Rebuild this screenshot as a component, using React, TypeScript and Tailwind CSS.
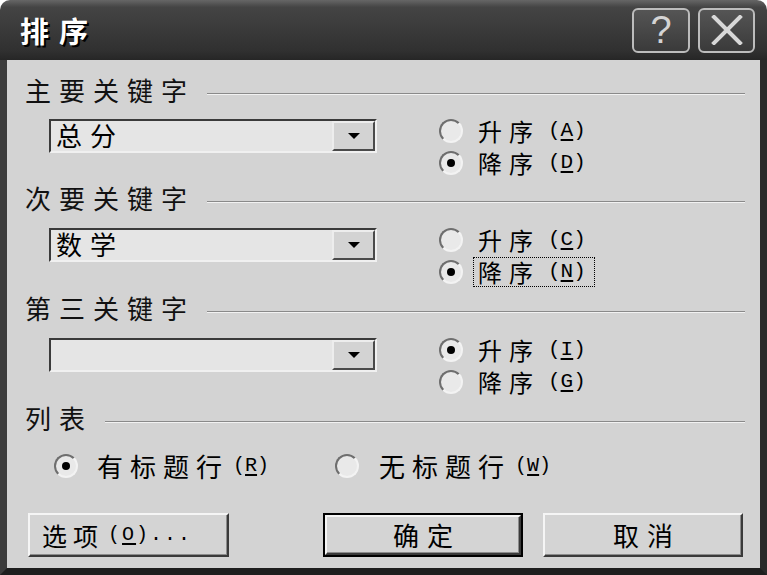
import React from 'react';

const cjk = "font-['Noto_Sans_CJK_SC','Noto_Sans_CJK_JP',sans-serif]";
const mono = "font-['Liberation_Mono','DejaVu_Sans_Mono',monospace]";

const Radio: React.FC<{ checked?: boolean }> = ({ checked }) => (
  <span className="flex h-[24px] w-[24px] shrink-0 items-center justify-center rounded-full border-2 border-t-[#6e6e6e] border-l-[#6e6e6e] border-r-[#f3f3f3] border-b-[#f3f3f3] bg-[#e9e9e9]">
    {checked && <span className="h-[8px] w-[8px] rounded-full bg-black" />}
  </span>
);

interface OptProps {
  text: string;
  keyChar: string;
  checked?: boolean;
  focus?: boolean;
}

// radio option row used in the three key sections
const Option: React.FC<OptProps> = ({ text, keyChar, checked, focus }) => (
  <div className="flex h-[32px] items-center">
    <Radio checked={checked} />
    <span
      className={`ml-[10px] flex h-[30px] items-center border pl-[4px] pr-[8px] ${
        focus ? 'border-dotted border-black' : 'border-transparent'
      }`}
    >
      <span className={`${cjk} text-[24px] leading-[24px] tracking-[7px] text-black`}>{text}</span>
      <span className={`${mono} ml-[8px] text-[21px] leading-[24px] text-black`}>
        (<u className="underline-offset-[3px]">{keyChar}</u>)
      </span>
    </span>
  </div>
);

const Combo: React.FC<{ value: string }> = ({ value }) => (
  <div className="mt-[4px] flex h-[34px] w-[328px] border-2 border-t-[#3a3a3a] border-l-[#3a3a3a] border-r-[#f0f0f0] border-b-[#f0f0f0] bg-[#e5e5e5]">
    <span className={`${cjk} flex-1 pl-[5px] text-[26px] leading-[28px] tracking-[8px] text-black`}>{value}</span>
    <div className="flex h-full w-[43px] items-center justify-center border-2 border-t-[#ededed] border-l-[#ededed] border-r-[#4a4a4a] border-b-[#4a4a4a] bg-[#d3d3d3]">
      <svg width="12" height="6" viewBox="0 0 12 6">
        <path d="M0 0 H12 L6 6 Z" fill="#000" />
      </svg>
    </div>
  </div>
);

const SectionLabel: React.FC<{ text: string; className?: string }> = ({ text, className = '' }) => (
  <div className={`flex h-[28px] items-center ${className}`}>
    <span className={`${cjk} text-[26px] leading-[28px] tracking-[8px] text-[#111]`}>{text}</span>
    <div className="ml-[12px] mt-[8px] h-[2px] flex-1 border-t border-b border-t-[#8a8a8a] border-b-[#f2f2f2]" />
  </div>
);

const KeySection: React.FC<{
  label: string;
  value: string;
  labelMt: string;
  contentMt: string;
  asc: OptProps;
  desc: OptProps;
}> = ({ label, value, labelMt, contentMt, asc, desc }) => (
  <>
    <SectionLabel text={label} className={labelMt} />
    <div className={`flex h-[64px] items-start pl-[24px] ${contentMt}`}>
      <Combo value={value} />
      <div className="ml-[62px] flex flex-col">
        <Option {...asc} />
        <Option {...desc} />
      </div>
    </div>
  </>
);

const raised =
  'border-2 border-t-[#f5f5f5] border-l-[#f5f5f5] border-r-[#3a3a3a] border-b-[#3a3a3a] bg-[#d4d4d4] shadow-[inset_-1px_-1px_0_#8c8c8c]';

export default function App() {
  return (
    <div className="flex h-[575px] w-[767px] flex-col bg-white">
      {/* Title bar */}
      <div className="flex h-[60px] shrink-0 items-center rounded-t-[10px] bg-[linear-gradient(#666_0%,#444_12%,#3a3a3a_50%,#303030_85%,#262626_100%)] pl-[20px] pr-[12px]">
        <span
          className={`${cjk} text-[29px] font-bold leading-none tracking-[10px] text-white [text-shadow:2px_2px_0_#000]`}
        >
          排序
        </span>
        <div className="ml-auto flex gap-[8px]">
          <div className="flex h-[45px] w-[58px] items-center justify-center rounded-[6px] border-2 border-[#bcbcbc] bg-[linear-gradient(#555,#3a3a3a)]">
            <span className="font-['Liberation_Sans',sans-serif] text-[38px] leading-none text-[#d4d4d4]">?</span>
          </div>
          <div className="flex h-[45px] w-[57px] items-center justify-center rounded-[6px] border-2 border-[#bcbcbc] bg-[linear-gradient(#555,#3a3a3a)]">
            <svg width="32" height="30" viewBox="0 0 32 30">
              <path d="M3 2 L29 28 M29 2 L3 28" stroke="#d8d8d8" strokeWidth="4" strokeLinecap="square" />
            </svg>
          </div>
        </div>
      </div>

      {/* Body */}
      <div className="flex flex-1 flex-col border-x-[7px] border-b-[7px] border-l-[#3c3c3c] border-r-[#2a2a2a] border-b-[#1e1e1e] bg-[#d3d3d3] pl-[18px] pr-[15px] pt-[16px]">
        <KeySection
          label="主要关键字"
          value="总分"
          labelMt=""
          contentMt="mt-[11px]"
          asc={{ text: '升序', keyChar: 'A' }}
          desc={{ text: '降序', keyChar: 'D', checked: true }}
        />
        <KeySection
          label="次要关键字"
          value="数学"
          labelMt="mt-[5px]"
          contentMt="mt-[12px]"
          asc={{ text: '升序', keyChar: 'C' }}
          desc={{ text: '降序', keyChar: 'N', checked: true, focus: true }}
        />
        <KeySection
          label="第三关键字"
          value=""
          labelMt="mt-[6px]"
          contentMt="mt-[12px]"
          asc={{ text: '升序', keyChar: 'I', checked: true }}
          desc={{ text: '降序', keyChar: 'G' }}
        />

        <SectionLabel text="列表" className="mt-[6px]" />
        <div className="mt-[18px] flex h-[32px] items-center pl-[29px]">
          <Radio checked />
          <span className={`${cjk} ml-[19px] text-[26px] leading-[28px] tracking-[7px] text-black`}>有标题行</span>
          <span className={`${mono} ml-[4px] text-[20px] leading-[28px] text-black`}>
            (<u className="underline-offset-[3px]">R</u>)
          </span>
          <span className="ml-[66px]">
            <Radio />
          </span>
          <span className={`${cjk} ml-[20px] text-[26px] leading-[28px] tracking-[7px] text-black`}>无标题行</span>
          <span className={`${mono} ml-[4px] text-[20px] leading-[28px] text-black`}>
            (<u className="underline-offset-[3px]">W</u>)
          </span>
        </div>

        {/* Buttons */}
        <div className="ml-[3px] mt-[31px] flex h-[44px] items-stretch">
          <button className={`${raised} flex w-[201px] items-center pl-[12px]`}>
            <span className={`${cjk} text-[25px] leading-[28px] tracking-[6px] text-black`}>选项</span>
            <span className={`${mono} ml-[4px] text-[20px] leading-[28px] tracking-[2px] text-black`}>
              (<u className="underline-offset-[3px]">O</u>)...
            </span>
          </button>
          <button className="ml-[94px] flex w-[200px] border-2 border-black">
            <span className={`${raised} flex flex-1 items-center justify-center`}>
              <span className={`${cjk} pl-[8px] text-[26px] leading-[28px] tracking-[8px] text-black`}>确定</span>
            </span>
          </button>
          <button className={`${raised} ml-[20px] flex w-[200px] items-center justify-center`}>
            <span className={`${cjk} pl-[8px] text-[26px] leading-[28px] tracking-[8px] text-black`}>取消</span>
          </button>
        </div>
      </div>
    </div>
  );
}
